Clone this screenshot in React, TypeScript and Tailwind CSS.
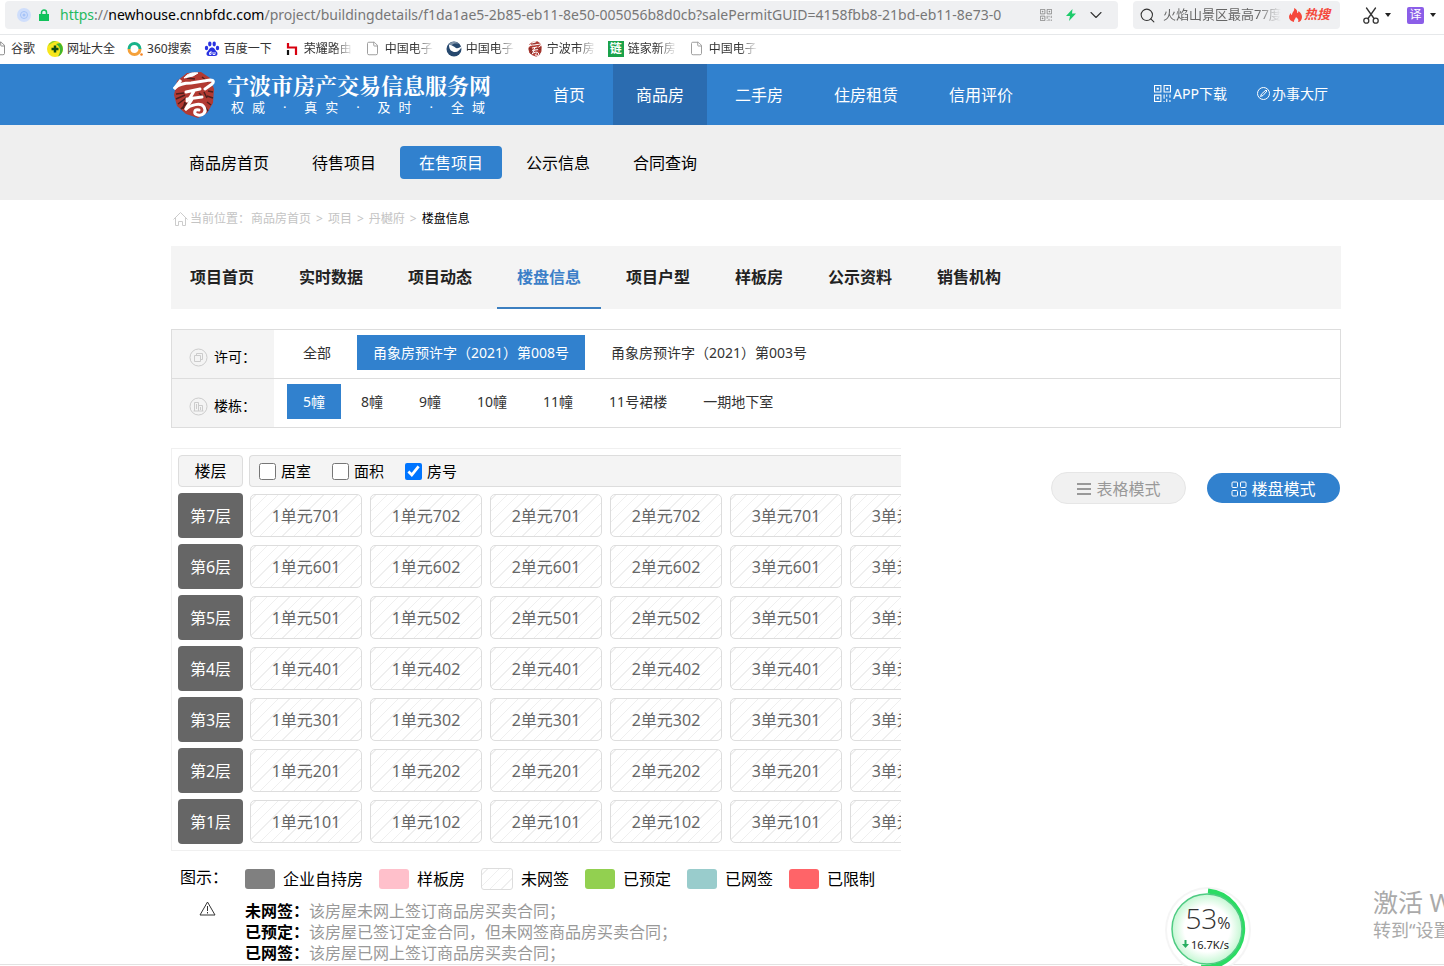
import type { ReactNode } from "react"
import { ChevronDown, File, Search } from "lucide-react"

const floors = [7, 6, 5, 4, 3, 2, 1]
const units = ["1单元{f}01", "1单元{f}02", "2单元{f}01", "2单元{f}02", "3单元{f}01", "3单元{f}02"]

const mainNav = ["首页", "商品房", "二手房", "住房租赁", "信用评价"]
const subNav = ["商品房首页", "待售项目", "在售项目", "公示信息", "合同查询"]
const tabs = ["项目首页", "实时数据", "项目动态", "楼盘信息", "项目户型", "样板房", "公示资料", "销售机构"]
const permits = ["全部", "甬象房预许字（2021）第008号", "甬象房预许字（2021）第003号"]
const buildings = ["5幢", "8幢", "9幢", "10幢", "11幢", "11号裙楼", "一期地下室"]

const hatch = "bg-[repeating-linear-gradient(-45deg,#fff_0_7px,#efefef_7px_8px)]"

const legend = [
  { label: "企业自持房", swatch: "w-[30px] h-5 bg-[#808080]" },
  { label: "样板房", swatch: "w-[30px] h-5 bg-[#ffc0cb]" },
  { label: "未网签", swatch: `w-8 h-[22px] border border-[#ddd] ${hatch}` },
  { label: "已预定", swatch: "w-[30px] h-5 bg-[#92d050]" },
  { label: "已网签", swatch: "w-[30px] h-5 bg-[#99cccc]" },
  { label: "已限制", swatch: "w-[30px] h-5 bg-[#ff6468]" },
]

const notes = [
  ["未网签：", "该房屋未网上签订商品房买卖合同；"],
  ["已预定：", "该房屋已签订定金合同，但未网签商品房买卖合同；"],
  ["已网签：", "该房屋已网上签订商品房买卖合同；"],
]

const SealLogo = ({ size }: { size: number }) => (
  <svg width={size} height={(size * 48) / 42} viewBox="0 0 42 48" fill="none" className="shrink-0">
    <path d="M14 2 L28 1 L37 7 L41 18 L40 32 L34 42 L25 47 L13 43 L4 35 L1 24 L4 10Z" fill="#b23a32" />
    <path
      d="M3 23l8-1M3 28l9-4M5 33l8-6M8 38l6-6M29 6l6 5M35 20l5 1M34 25l6 2M34 31l4 3M32 36l3 4M14 7l8 1M31 21l3 6M12 31l-2 7M26 22l4 4"
      stroke="#4f1f1d"
      strokeWidth="1.500"
    />
    <path d="M25 2c-6-1-11 1-14 5l9-2z" fill="#fff" stroke="#fff" />
    <path d="M8 9L1 18" stroke="#fff" strokeWidth="3" />
    <path d="M2 17c4-4 9-5 16-5l19-3c4 0 4 2 2 4l-7 5" stroke="#fff" strokeWidth="3" strokeLinecap="round" />
    <path
      d="M13 21l14-3M21 20c-2 4-4 7-7 10M14 28l15-2M19 28c-2 4-5 7-6 10"
      stroke="#fff"
      strokeWidth="3"
      strokeLinecap="round"
      strokeLinejoin="round"
    />
    <path d="M13 38c4-4 15-7 18-2s-1 9-6 8-4-6 1-5" stroke="#fff" strokeWidth="3" strokeLinecap="round" />
  </svg>
)

const QrIcon = ({ size }: { size: number }) => (
  <svg width={size} height={size} viewBox="0 0 16 16" fill="none" stroke="currentColor" className="shrink-0">
    <path d="M.5.5h6v6h-6zM9.5.5h6v6h-6zM.5 9.5h6v6h-6zM3 3h1v1H3zM12 3h1v1h-1zM3 12h1v1H3zM9.5 9v4M12 9v2M15 9v3M12 13v3M9.5 15v1M15 14v2" />
  </svg>
)

const HomeIcon = () => (
  <svg width="15" height="14" viewBox="0 0 15 14" fill="none" stroke="#ccc" className="shrink-0">
    <path d="M.5 7.500l7-7 7 7M2.500 6v7.500h3V9.500h4v4h3V6" />
  </svg>
)

const ScissorsIcon = () => (
  <svg width="16" height="17" viewBox="0 0 16 17" fill="none" stroke="#333" strokeWidth="1.300" strokeLinecap="round">
    <path d="M3.500 1l7.500 10.500M12.500 1L5 11.500" />
    <circle cx="3.300" cy="13.700" r="2.500" />
    <circle cx="12.700" cy="13.700" r="2.500" />
  </svg>
)

const Caret = () => <span className="border-x-[3px] border-t-[4px] border-x-transparent border-t-[#222]" />

const bookmarks: { label: string; icon: ReactNode; fade?: boolean }[] = [
  { label: "谷歌", icon: <File size={15} color="#888" strokeWidth={1.5} /> },
  {
    label: "网址大全",
    icon: (
      <svg width="16" height="16" viewBox="0 0 16 16">
        <circle cx="8" cy="8" r="8" fill="#f8e71c" />
        <path d="M13 2a8 8 0 0 1-2 13.500C14 11 14 6 9 3z" fill="#3fb52e" />
        <path d="M1 5a8 8 0 0 1 9-5C6 1 3 3 1 5z" fill="#8fd02c" />
        <path d="M8 4.500v7M4.500 8h7" stroke="#0b4a12" strokeWidth="2.500" />
      </svg>
    ),
  },
  {
    label: "360搜索",
    icon: (
      <svg width="16" height="16" viewBox="0 0 16 16" fill="none" strokeWidth="3">
        <path d="M2 8a5.500 5.500 0 0 1 11 0" stroke="#19b38a" />
        <path d="M13 8a5.500 5.500 0 0 1-11 0" stroke="#f5a13a" />
        <circle cx="14.500" cy="13.500" r="1.300" fill="#f58220" />
      </svg>
    ),
  },
  {
    label: "百度一下",
    icon: (
      <svg width="16" height="16" viewBox="0 0 16 16" fill="#2932e1">
        <ellipse cx="2.500" cy="7" rx="1.700" ry="2.200" />
        <ellipse cx="5.800" cy="3" rx="1.700" ry="2.400" />
        <ellipse cx="10.200" cy="3" rx="1.700" ry="2.400" />
        <ellipse cx="13.500" cy="7" rx="1.700" ry="2.200" />
        <path d="M8 6.500c2.500 0 3 2.500 4.500 4s1.500 4.500-1.500 4.500H5c-3 0-3-3-1.500-4.500S5.500 6.500 8 6.500z" />
        <path d="M7 10v3.500H5.500v-2H7M9 11v2.500h2V11" fill="none" stroke="#fff" strokeWidth=".9" />
      </svg>
    ),
  },
  {
    label: "荣耀路由",
    fade: true,
    icon: (
      <svg width="16" height="16" viewBox="0 0 16 16" fill="none" strokeWidth="2.200">
        <path d="M4 2v4.500h8V14" stroke="#d7000f" />
        <path d="M4 9v5" stroke="#111" />
      </svg>
    ),
  },
  { label: "中国电子", fade: true, icon: <File size={15} color="#999" strokeWidth={1.5} /> },
  {
    label: "中国电子",
    fade: true,
    icon: (
      <svg width="16" height="16" viewBox="0 0 16 16" fill="none">
        <circle cx="8" cy="8" r="7.500" fill="#27496f" />
        <path d="M3 4c0 5 3 7 6 7s5-2 7-6c-2 1-4 3-6 2S7 4 3 4z" fill="#fff" />
        <path d="M2 4c3-4 8-4 11-1-4-1-6 0-7 1z" fill="#7f93a8" />
      </svg>
    ),
  },
  { label: "宁波市房", fade: true, icon: <SealLogo size={14} /> },
  {
    label: "链家新房",
    fade: true,
    icon: <span className="size-4 bg-[#1aa24a] text-center text-xs leading-4 font-bold text-white">链</span>,
  },
  { label: "中国电子", fade: true, icon: <File size={15} color="#999" strokeWidth={1.5} /> },
]

const BrowserBar = () => (
  <div className="shrink-0 bg-white">
    <div className="flex h-[35px] items-start border-b border-[#e6e8ea] pt-px pl-[5px] text-[#333]">
      <div className="flex h-7 min-w-0 flex-1 items-center rounded bg-[#eff0f2] px-3">
        <svg width="14" height="14" viewBox="0 0 14 14" fill="none" className="shrink-0">
          <circle cx="7" cy="7" r="7" fill="#cfdefb" />
          <circle cx="7" cy="7" r="3.500" stroke="#a5c3f8" />
          <circle cx="7" cy="7" r="1.500" fill="#a5c3f8" />
        </svg>
        <svg width="10" height="12" viewBox="0 0 10 12" fill="none" className="ml-2 shrink-0">
          <path d="M0 5h10v7H0z" fill="#12c25b" />
          <path d="M2.500 5V3.500a2.500 2.500 0 0 1 5 0V5" stroke="#12c25b" strokeWidth="1.500" />
        </svg>
        <div className="ml-[11px] min-w-0 flex-1 overflow-hidden text-sm whitespace-nowrap text-[#777]">
          <span className="text-[#1fba5e]">https</span>://<span className="text-black">newhouse.cnnbfdc.com</span>
          /project/buildingdetails/f1da1ae5-2b85-eb11-8e50-005056b8d0cb?salePermitGUID=4158fbb8-21bd-eb11-8e73-0
        </div>
        <div className="ml-4 flex items-center gap-3.5">
          <span className="text-[#777]">
            <QrIcon size={12} />
          </span>
          <svg width="10" height="12" viewBox="0 0 10 12">
            <path d="M6.500 0L0 7h4l-1 5 7-7.500H6z" fill="#1ecb6b" />
          </svg>
          <ChevronDown size={20} strokeWidth={1.3} className="-ml-1" />
        </div>
      </div>
      <label className="ml-[15px] flex h-7 w-[207px] shrink-0 items-center rounded bg-[#eff0f2] pr-2 pl-1.5">
        <Search size={17} strokeWidth={1.5} className="shrink-0" aria-label="搜索" />
        <input
          className="ml-[7px] w-[118px] mask-[linear-gradient(to_right,#000_80%,transparent)] text-[13px] text-[#666] outline-none"
          defaultValue="火焰山景区最高77度"
        />
        <svg width="13" height="14" viewBox="0 0 13 14" className="ml-2 shrink-0">
          <path
            d="M5 0c3 1 3.500 3 3 5 1 0 1.500-1 1.500-2C12 5 13 7 13 9c0 3-2 5-4 5 1-2 0-3.500-2-5-.5 2-2.500 3-2 5-3-.5-5-2.500-5-5 0-2 1-3 2-4 0 1 0 2 1 2C3 4 6 3 5 0z"
            fill="#f5483b"
          />
        </svg>
        <b className="ml-0.5 shrink-0 text-[13px] text-[#f5483b] italic">热搜</b>
      </label>
      <div className="mr-2 ml-[23px] flex h-7 shrink-0 items-center">
        <ScissorsIcon />
        <span className="ml-1.5 flex">
          <Caret />
        </span>
        <span className="ml-4 size-[17px] rounded-xs bg-[#8b5ee8] text-center text-xs leading-4 text-white">译</span>
        <span className="ml-1.5 flex">
          <Caret />
        </span>
      </div>
    </div>
    <div className="-ml-[9px] flex h-[29px] items-center gap-3 overflow-hidden pb-0.5 text-xs text-[#333]">
      {bookmarks.map((b, i) => (
        <a key={i} href="#" className="flex shrink-0 items-center gap-1">
          <span className="flex w-4 justify-center">{b.icon}</span>
          {b.fade ? (
            <span className="w-[49px] mask-[linear-gradient(to_right,#000_60%,transparent)]">{b.label}</span>
          ) : (
            b.label
          )}
        </a>
      ))}
    </div>
  </div>
)

const Header = () => (
  <header className="flex h-[61px] items-center bg-[#3181ce] pr-[116px] pl-[173px] text-white">
    <SealLogo size={42} />
    <div className="ml-3 w-[303px] shrink-0">
      <div className="font-['Noto_Serif_CJK_SC','Noto_Sans_CJK_SC',serif] text-[22px] leading-6 font-bold whitespace-nowrap">
        宁波市房产交易信息服务网
      </div>
      <div className="ml-1 flex w-[254px] justify-between text-[13px] leading-5">
        {["权威", "·", "真实", "·", "及时", "·", "全域"].map((word, i) => (
          <span key={i} className="flex gap-2">
            {[...word].map((c) => (
              <span key={c}>{c}</span>
            ))}
          </span>
        ))}
      </div>
    </div>
    <nav className="flex h-full gap-[5px]">
      {mainNav.map((item) => (
        <a
          key={item}
          href="#"
          className={`flex items-center px-[23px] whitespace-nowrap ${item === "商品房" ? "bg-[#2b6cb0]" : ""}`}>
          {item}
        </a>
      ))}
    </nav>
    <div className="ml-auto flex gap-[30px] pb-0.5 text-sm whitespace-nowrap">
      <a href="#" className="flex items-center gap-0.5">
        <QrIcon size={17} />
        APP下载
      </a>
      <a href="#" className="flex items-center gap-0.5">
        <svg width="13" height="13" viewBox="0 0 13 13" fill="none" stroke="currentColor">
          <circle cx="6.500" cy="6.500" r="6" />
          <path d="M3.500 9.500l1-2.500 4.500-4 1 1-4 4.500z" />
        </svg>
        办事大厅
      </a>
    </div>
  </header>
)

const SubNav = () => (
  <nav className="flex h-[75px] items-center gap-[5px] bg-[#efefef] pl-[170px]">
    {subNav.map((item) => (
      <a
        key={item}
        href="#"
        className={`rounded px-[19px] pt-px leading-8 ${item === "在售项目" ? "bg-[#3181ce] text-white" : "text-black"}`}>
        {item}
      </a>
    ))}
  </nav>
)

const Breadcrumb = () => (
  <div className="flex h-[46px] items-start gap-[5px] pt-[11px] pl-0.5 text-xs leading-4 text-[#c4c4c4]">
    <div className="-mr-1 flex items-center gap-0.5">
      <HomeIcon />
      当前位置：
    </div>
    <a href="#">商品房首页</a>
    <span>&gt;</span>
    <a href="#">项目</a>
    <span>&gt;</span>
    <a href="#">丹樾府</a>
    <span>&gt;</span>
    <span className="text-black">楼盘信息</span>
  </div>
)

interface FilterRowProps {
  label: string
  icon: ReactNode
  options: string[]
  active: string
  gap: string
}
const FilterRow = ({ label, icon, options, active, gap }: FilterRowProps) => (
  <div className="flex h-[49px] border-b border-[#ddd] text-sm">
    <div className="flex w-[102px] shrink-0 items-center gap-1.5 bg-[#f4f4f4] pt-1.5 pl-[17px] text-black">
      <svg width="19" height="19" viewBox="0 0 19 19" fill="none" stroke="#ccc">
        <circle cx="9.500" cy="9.500" r="8.500" />
        {icon}
      </svg>
      {label}
    </div>
    <div className={`flex items-start pt-[5px] pl-[13px] ${gap}`}>
      {options.map((o) => (
        <button
          key={o}
          className={`px-4 leading-[35px] whitespace-nowrap ${o === active ? "bg-[#3181ce] text-white" : "text-[#333]"}`}>
          {o}
        </button>
      ))}
    </div>
  </div>
)

const HouseGrid = () => (
  <div className="w-[730px] shrink-0 overflow-hidden border-y border-l border-[#f0f0f0] p-1.5 pr-0">
    <div className="mb-1.5 flex gap-1.5">
      <div className="w-[65px] shrink-0 rounded border border-[#ddd] bg-[#f4f4f4] text-center leading-[30px] text-black">
        楼层
      </div>
      <div className="flex flex-1 items-center gap-[21px] rounded-l border-y border-l border-[#ddd] bg-[#f4f4f4] pl-[9px] text-[15px] leading-[30px] text-black">
        {["居室", "面积", "房号"].map((c) => (
          <label key={c} className="flex items-center gap-[5px]">
            <input type="checkbox" defaultChecked={c === "房号"} className="size-[17px]" />
            {c}
          </label>
        ))}
      </div>
    </div>
    <div className="flex flex-col gap-1.5">
      {floors.map((f) => (
        <div key={f} className="flex items-center gap-2">
          <div className="-mr-px w-[65px] shrink-0 rounded bg-[#666] pt-px text-center leading-[44px] text-white">
            第{f}层
          </div>
          {units.map((u) => (
            <button
              key={u}
              className={`h-[43px] w-28 shrink-0 rounded-[5px] border border-[#ddd] text-[#666] ${hatch}`}>
              {u.replace("{f}", String(f))}
            </button>
          ))}
        </div>
      ))}
    </div>
  </div>
)

const ModeButtons = () => (
  <div className="mr-px ml-auto flex items-center gap-[21px] pt-6 whitespace-nowrap">
    <button className="flex h-8 w-[135px] items-center justify-center gap-1 rounded-full border border-[#e6e6e6] bg-[#f1f1f1] pt-px text-[#999]">
      <svg width="16" height="14" viewBox="0 0 16 14" stroke="currentColor" strokeWidth="2">
        <path d="M1 2h14M1 7h14M1 12h14" />
      </svg>
      表格模式
    </button>
    <button className="flex h-[30px] w-[133px] items-center justify-center gap-1 rounded-full bg-[#3181ce] pt-px text-white">
      <svg width="16" height="16" viewBox="0 0 16 16" fill="none" stroke="currentColor">
        <rect x="1" y="1" width="5.500" height="5.500" rx="1" />
        <rect x="9.500" y="1" width="5.500" height="5.500" rx="1" />
        <rect x="1" y="9.500" width="5.500" height="5.500" rx="1" />
        <rect x="9.500" y="9.500" width="5.500" height="5.500" rx="1" />
      </svg>
      楼盘模式
    </button>
  </div>
)

const Legend = () => (
  <div className="mt-3.5 text-black">
    <div className="flex items-center">
      <div className="w-[74px] pb-1 pl-[9px] whitespace-nowrap">图示：</div>
      <div className="flex gap-4">
        {legend.map((l) => (
          <div key={l.label} className="flex items-center gap-2">
            <span className={`rounded-[3px] ${l.swatch}`} />
            {l.label}
          </div>
        ))}
      </div>
    </div>
    <div className="mt-2 flex">
      <div className="w-[74px] pl-7">
        <svg width="17" height="15" viewBox="0 0 17 15" fill="none" stroke="#333" strokeLinejoin="round">
          <path d="M8.500 1l7.500 13H1zM8.500 5v5M8.500 11v1.500" />
        </svg>
      </div>
      <div className="leading-[21px]">
        {notes.map(([name, text]) => (
          <p key={name} className="text-[#999]">
            <b className="text-black">{name}</b>
            {text}
          </p>
        ))}
      </div>
    </div>
  </div>
)

const SpeedBall = () => (
  <div className="absolute right-[192px] -bottom-2 size-[88px]">
    <svg viewBox="0 0 88 88" className="absolute inset-0" fill="none">
      <defs>
        <radialGradient id="ball">
          <stop offset="0.65" stopColor="#fff" />
          <stop offset="1" stopColor="#c5f7d3" />
        </radialGradient>
      </defs>
      <circle cx="44" cy="44" r="43" fill="#f5f5f5" />
      <circle cx="44" cy="44" r="41" fill="#fff" />
      <path d="M44 5a38 38 0 1 1-7 76" stroke="#2bdc63" strokeWidth="5" />
      <circle cx="43" cy="43" r="35" fill="url(#ball)" stroke="#4fcb83" strokeWidth="1.500" />
      <path d="M21.500 54v5" stroke="#27ae60" strokeWidth="2" />
      <path d="M18 58h7l-3.500 4z" fill="#27ae60" />
    </svg>
    <div className="relative pt-4 text-center font-['Open_Sans',sans-serif] text-[28px] leading-8 font-light text-[#333]">
      53<span className="text-base font-normal">%</span>
    </div>
    <div className="relative pl-[27px] text-[11px] leading-5 text-[#222]">16.7K/s</div>
  </div>
)

export default function App() {
  return (
    <div className="relative flex h-screen flex-col overflow-hidden bg-white font-['Noto_Sans','Noto_Sans_CJK_SC',sans-serif] text-base">
      <BrowserBar />
      <div className="min-h-0 flex-1 overflow-hidden">
        <Header />
        <SubNav />
        <main className="pr-[103px] pl-[171px]">
          <Breadcrumb />
          <nav className="flex gap-[5px] bg-[#f4f4f4] font-bold text-[#222]">
            {tabs.map((t) => (
              <a
                key={t}
                href="#"
                className={`border-b-2 px-5 pt-px leading-[60px] first:pl-[19px] ${
                  t === "楼盘信息" ? "border-[#3c7fc0] text-[#3c7fc8]" : "border-transparent"
                }`}>
                {t}
              </a>
            ))}
          </nav>
          <div className="mt-5 border-x border-t border-[#ddd]">
            <FilterRow
              label="许可："
              icon={<path d="M5.500 7.500h6v6h-6zM7.500 7.500v-2h6v6h-2" />}
              options={permits}
              active={permits[1]}
              gap="gap-2.5"
            />
            <FilterRow
              label="楼栋："
              icon={<path d="M5.500 14V5.500h4V14M9.500 8.500h4V14M4.500 14h10M7.500 7v5M11.500 10v3" />}
              options={buildings}
              active="5幢"
              gap="gap-1"
            />
          </div>
          <div className="mt-5 flex items-start">
            <HouseGrid />
            <ModeButtons />
          </div>
          <Legend />
        </main>
      </div>
      <div className="h-0.5 shrink-0 border-t border-[#e2e2e2]" />
      <div className="absolute right-0 bottom-6 w-[71px] overflow-hidden whitespace-nowrap text-[#aaa]">
        <div className="text-[25px] leading-8">激活 W</div>
        <div className="text-lg leading-6">转到“设置</div>
      </div>
      <SpeedBall />
    </div>
  )
}
